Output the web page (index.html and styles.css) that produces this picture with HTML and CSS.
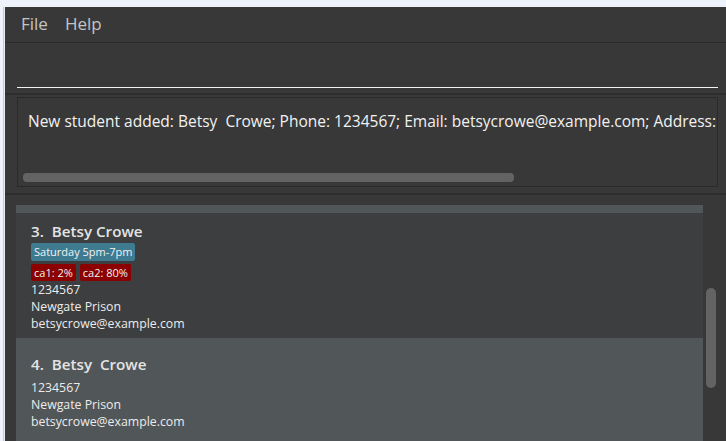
FILE: index.html
```html
<!DOCTYPE html>
<html>
<head>
<meta charset="utf-8">
<link rel="stylesheet" href="styles.css">
</head>
<body>
<div class="topstrip"></div>
<div class="main">
  <div class="leftstrip"></div>
  <div class="window">
    <div class="menubar">
      <span class="menu-item">File</span>
      <span class="menu-item">Help</span>
    </div>
    <div class="command">
      <div class="command-input"></div>
    </div>
    <div class="result">
      <div class="result-box">
        <div class="result-text">New student added: Betsy&nbsp; Crowe; Phone: 1234567; Email: betsycrowe@example.com; Address:</div>
        <div class="hscroll"><div class="hthumb"></div></div>
      </div>
    </div>
    <div class="list-area">
      <div class="list">
        <div class="cell cell-alt cell-partial">
          <div class="partial-text">betsycrowe@example.com</div>
        </div>
        <div class="cell cell-3">
          <div class="name">3.&nbsp; Betsy Crowe</div>
          <div class="tags">
            <span class="tag tag-blue">Saturday 5pm-7pm</span>
          </div>
          <div class="tags tags-red">
            <span class="tag tag-red">ca1: 2%</span>
            <span class="tag tag-red">ca2: 80%</span>
          </div>
          <div class="detail">1234567</div>
          <div class="detail">Newgate Prison</div>
          <div class="detail">betsycrowe@example.com</div>
        </div>
        <div class="cell cell-alt cell-4">
          <div class="name">4.&nbsp; Betsy&nbsp; Crowe</div>
          <div class="detail detail-first">1234567</div>
          <div class="detail">Newgate Prison</div>
          <div class="detail">betsycrowe@example.com</div>
        </div>
      </div>
      <div class="vscroll"><div class="vthumb"></div></div>
    </div>
  </div>
</div>
</body>
</html>
```
FILE: styles.css
```css
html, body {
  margin: 0;
  padding: 0;
  height: 100%;
  overflow: hidden;
}
body {
  background: #eef2f9;
  font-family: "Open Sans", "Noto Sans", sans-serif;
  display: flex;
  flex-direction: column;
}
.topstrip {
  height: 7px;
  flex: none;
  background: #eef3fb;
}
.main {
  flex: 1;
  display: flex;
  min-height: 0;
}
.leftstrip {
  width: 5px;
  flex: none;
  background: #e9edf3;
  border-left: 3px solid #eef2f9;
  box-sizing: border-box;
  box-shadow: inset 1px 0 0 #c9ccd2;
}
.window {
  flex: 1;
  background: #383838;
  display: flex;
  flex-direction: column;
  min-width: 0;
}
.menubar {
  height: 36px;
  flex: none;
  box-sizing: border-box;
  border-bottom: 1px solid #2b2b2b;
  display: flex;
  align-items: center;
  padding: 0 0 2px 16px;
  gap: 17px;
}
.menu-item {
  color: #c4c4c4;
  font-size: 17px;
}
.command {
  height: 52px;
  flex: none;
  box-sizing: border-box;
  padding: 0 8px 5px 12px;
  border-bottom: 2px solid #2d2d2d;
  display: flex;
  align-items: flex-end;
}
.command-input {
  flex: 1;
  height: 0;
  border-bottom: 1.5px solid #f2f2f2;
}
.result {
  height: 100px;
  flex: none;
  box-sizing: border-box;
  padding: 2px 8px 0 12px;
  border-bottom: 2px solid #2d2d2d;
}
.result-box {
  height: 90px;
  box-sizing: border-box;
  border: 1px solid #2a2a2a;
  display: flex;
  flex-direction: column;
  overflow: hidden;
}
.result-text {
  color: #f2f2f2;
  font-size: 15.5px;
  white-space: nowrap;
  padding: 12px 0 0 10px;
  line-height: 22px;
}
.hscroll {
  margin-top: auto;
  padding: 0 0 4px 5px;
}
.hthumb {
  width: 491px;
  height: 9px;
  border-radius: 4px;
  background: #636363;
}
.list-area {
  flex: 1;
  display: flex;
  min-height: 0;
  padding-top: 10px;
  padding-left: 11px;
}
.list {
  width: 687px;
  flex: none;
  display: flex;
  flex-direction: column;
  overflow: hidden;
}
.cell {
  background: #3c3e3f;
  padding-left: 15px;
  flex: none;
}
.cell-alt {
  background: #515658;
}
.cell-partial {
  height: 8px;
  box-sizing: border-box;
  overflow: hidden;
  display: flex;
  align-items: flex-end;
}
.partial-text {
  color: #e8e8e8;
  font-size: 12.3px;
  line-height: 17px;
  margin-bottom: -14px;
}
.cell-3 {
  padding-top: 8px;
  padding-bottom: 6px;
}
.name {
  color: #e4e4e4;
  font-size: 15.2px;
  font-weight: 600;
  line-height: 20px;
}
.tags {
  display: flex;
  gap: 4px;
  margin-top: 2px;
}
.tags-red {
  margin-top: 3px;
}
.tag {
  color: #f2f2f2;
  font-size: 11px;
  line-height: 17px;
  padding: 0 3px;
  border-radius: 2px;
}
.tag-blue {
  background: #3e7b91;
  line-height: 18px;
}
.tag-red {
  background: #8b0000;
}
.detail {
  color: #ececec;
  font-size: 12.3px;
  line-height: 17px;
}
.cell-4 {
  padding-top: 16px;
  flex: 1;
}
.detail-first {
  margin-top: 5px;
}
.vscroll {
  flex: 1;
  padding: 83px 0 0 3px;
}
.vthumb {
  width: 10px;
  height: 100px;
  border-radius: 5px;
  background: #636363;
}
```
